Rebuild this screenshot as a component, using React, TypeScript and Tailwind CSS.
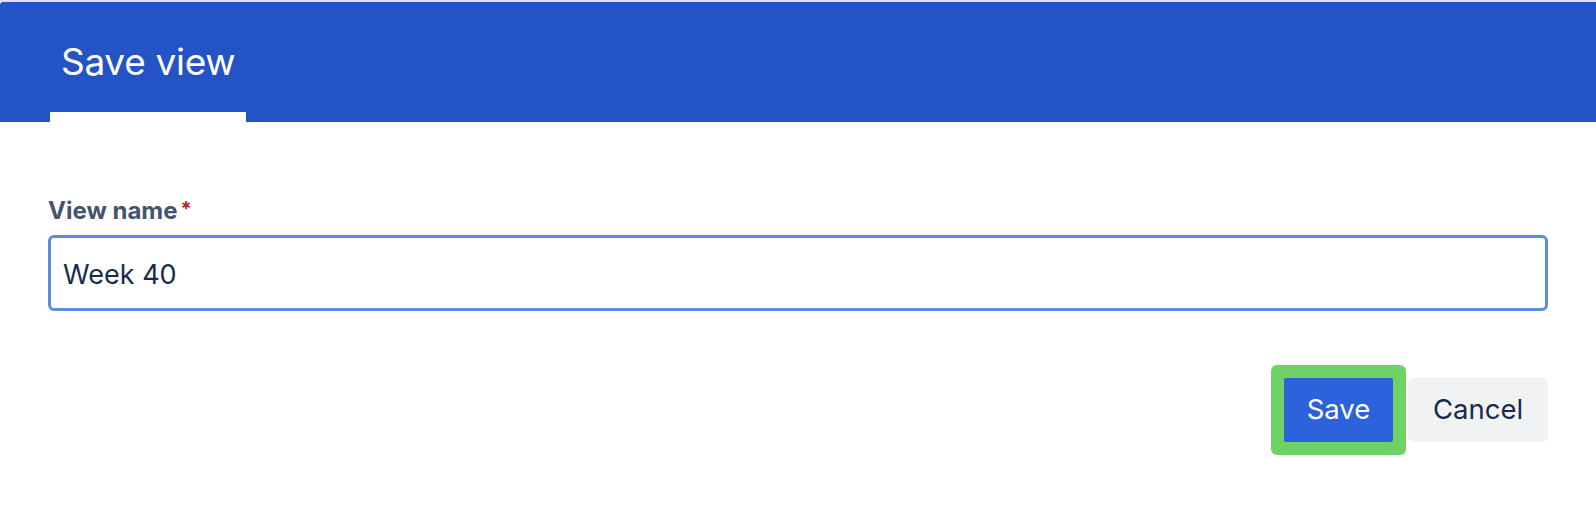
import React from "react";

export default function App() {
  return (
    <div className="w-[1596px] h-[508px] bg-white overflow-hidden" style={{ fontFamily: "Inter, 'Noto Sans', sans-serif" }}>
      <div className="h-[2px] bg-[#dfe3ef]" />
      <div className="h-[120px] bg-[#2353c5] flex flex-col rounded-tl-[3px]">
        <div className="pt-[41px] pl-[61px] text-[37px] leading-none text-white tracking-[-0.3px]">Save view</div>
        <div className="mt-auto ml-[50px] w-[196px] h-[10px] bg-white" />
      </div>
      <div className="px-[48px]">
        <div className="mt-[77px] flex items-start text-[24px] leading-none font-bold text-[#44546f]">
          <span>View name</span>
          <span className="ml-[3px] text-[#ae2e24] text-[20px]">*</span>
        </div>
        <div className="mt-[12px] h-[76px] border-[3px] border-[#5b8de3] rounded-[6px] flex items-center pl-[12px] pt-[3px]">
          <span className="text-[27px] leading-none text-[#172b4d]">Week 40</span>
        </div>
        <div className="mt-[54px] flex justify-end items-center">
          <div className="p-[13px] bg-[#6fd264] rounded-[6px]">
            <button className="w-[109px] h-[64px] bg-[#2c62dc] rounded-[2px] text-white text-[27.5px] leading-none">Save</button>
          </div>
          <button className="ml-[2px] w-[140px] h-[64px] bg-[#f1f2f4] rounded-[6px] text-[#172b4d] text-[27.5px] leading-none">Cancel</button>
        </div>
      </div>
    </div>
  );
}
